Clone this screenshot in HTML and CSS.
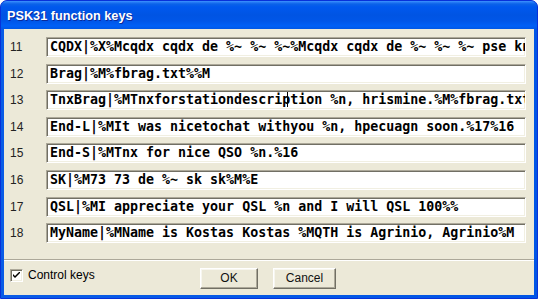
FILE: index.html
```html
<!DOCTYPE html>
<html>
<head>
<meta charset="utf-8">
<link rel="stylesheet" href="styles.css">
</head>
<body>
<div class="window">
  <div class="titlebar"><span class="title">PSK31 function keys</span></div>
  <div class="frame">
    <div class="client">
      <div class="keys">
        <span class="num">11</span><div class="field">CQDX|%X%Mcqdx cqdx de %~ %~ %~%Mcqdx cqdx de %~ %~ %~ pse kn%M</div>
        <span class="num">12</span><div class="field">Brag|%M%fbrag.txt%%M</div>
        <span class="num">13</span><div class="field">TnxBrag|%MTnxforstationdescrip<span class="caret"></span>tion %n, hrismine.%M%fbrag.txt%M</div>
        <span class="num">14</span><div class="field">End-L|%MIt was nicetochat withyou %n, hpecuagn soon.%17%16</div>
        <span class="num">15</span><div class="field">End-S|%MTnx for nice QSO %n.%16</div>
        <span class="num">16</span><div class="field">SK|%M73 73 de %~ sk sk%M%E</div>
        <span class="num">17</span><div class="field">QSL|%MI appreciate your QSL %n and I will QSL 100%%</div>
        <span class="num">18</span><div class="field">MyName|%MName is Kostas Kostas %MQTH is Agrinio, Agrinio%M</div>
      </div>
      <div class="separator"></div>
      <div class="footer">
        <div class="check">
          <span class="box"><svg width="7" height="7" viewBox="0 0 7 7"><path d="M0 2 L2 4 L7 -1 L7 1 L2 6 L0 4 Z" fill="#000"/></svg></span>
          <span class="check-label">Control keys</span>
        </div>
        <div class="buttons">
          <div class="btn btn-ok">OK</div>
          <div class="btn btn-cancel">Cancel</div>
        </div>
      </div>
    </div>
  </div>
</div>
</body>
</html>
```
FILE: styles.css
```css
html, body {
  margin: 0;
  padding: 0;
  background: #ffffff;
}

.window {
  width: 538px;
  height: 299px;
  box-sizing: border-box;
  border: 1px solid #0831d9;
  border-radius: 7px 7px 0 0;
  display: flex;
  flex-direction: column;
  overflow: hidden;
  background: #0855dd;
}

.titlebar {
  height: 28px;
  flex: none;
  display: flex;
  align-items: center;
  padding: 2px 0 0 6px;
  box-sizing: border-box;
  background: linear-gradient(to bottom,
    #3d95ff 0px, #2a7ff7 1px, #0b62e8 3px, #0058ee 6px,
    #0054e3 14px, #0056e8 20px, #0060f6 25px, #0057e5 28px);
}

.title {
  font: bold 12.7px/16px "Liberation Sans", Arial, sans-serif;
  color: #ffffff;
  text-shadow: 1px 1px 0 #0a2a9a;
}

.frame {
  flex: 1;
  padding: 0 3px 3px;
  background: linear-gradient(to right, #0a5ce6, #0055e5);
  display: flex;
}

.client {
  flex: 1;
  background: #ece9d8;
  display: flex;
  flex-direction: column;
}

.keys {
  display: grid;
  grid-template-columns: 36px 1fr;
  grid-auto-rows: 20px;
  row-gap: 6.6px;
  padding: 8px 8px 0 6px;
  align-items: center;
}

.num {
  font: 12px/14px "Liberation Sans", Arial, sans-serif;
  color: #222222;
}

.field {
  height: 20px;
  box-sizing: border-box;
  border: 1px solid;
  border-color: #aca899 #ffffff #ffffff #aca899;
  box-shadow: inset 1px 1px 0 #716f64, inset -1px -1px 0 #f1efe2;
  background: #ffffff;
  padding: 0 2px 0 3px;
  font: bold 13.3px/18px "DejaVu Sans Mono", monospace;
  color: #000000;
  white-space: pre;
  overflow: hidden;
}

.caret {
  display: inline-block;
  width: 0;
  height: 15px;
  border-left: 1px solid #000000;
  margin-left: -3px;
  margin-right: 2px;
  vertical-align: -3px;
}

.separator {
  margin-top: 16px;
  height: 0;
  border-top: 1px solid #aca899;
  border-bottom: 1px solid #ffffff;
}

.footer {
  display: flex;
  align-items: flex-start;
  padding: 7px 0 0 6px;
}

.check {
  width: 190px;
  display: flex;
  align-items: center;
  gap: 5px;
  height: 14px;
}

.box {
  width: 13px;
  height: 13px;
  box-sizing: border-box;
  border: 1px solid;
  border-color: #aca899 #ffffff #ffffff #aca899;
  box-shadow: inset 1px 1px 0 #716f64, inset -1px -1px 0 #f1efe2;
  background: #ffffff;
  display: flex;
  align-items: center;
  justify-content: center;
}

.check-label {
  font: 12px/14px "Liberation Sans", Arial, sans-serif;
  color: #000000;
}

.buttons {
  display: flex;
  gap: 15px;
}

.btn {
  height: 21px;
  box-sizing: border-box;
  border: 1px solid;
  border-color: #ffffff #716f64 #716f64 #ffffff;
  box-shadow: inset -1px -1px 0 #aca899, inset 1px 1px 0 #f7f6ef;
  background: #ece9d8;
  font: 12px/19px "Liberation Sans", Arial, sans-serif;
  color: #111111;
  text-align: center;
}

.btn-ok {
  width: 58px;
}

.btn-cancel {
  width: 63px;
}
```
